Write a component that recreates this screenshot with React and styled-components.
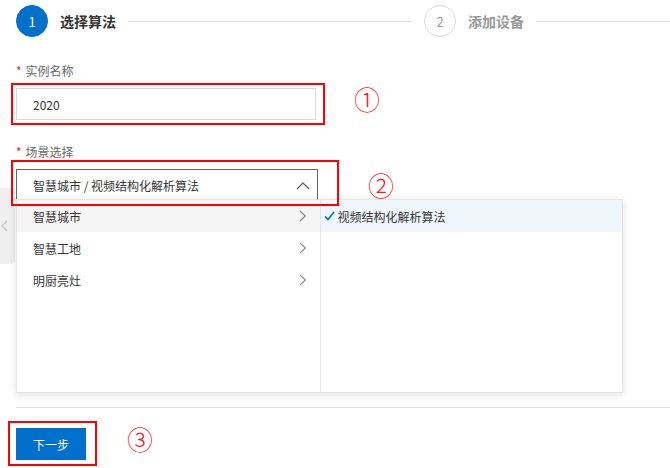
import styled, { createGlobalStyle } from 'styled-components';

const GlobalStyle = createGlobalStyle`
	html, body {
		margin: 0;
		padding: 0;
		background: #fff;
		font-family: "Noto Sans CJK SC", "Noto Sans", sans-serif;
		color: #333;
	}
	* {
		box-sizing: border-box;
	}
`;

const Page = styled.div`
	position: relative;
	width: 670px;
	height: 468px;
	overflow: hidden;
`;

const SideTab = styled.div`
	position: absolute;
	left: 0;
	top: 188px;
	width: 15px;
	height: 76px;
	background: #efefef;
	border-radius: 0 4px 4px 0;
	display: flex;
	align-items: center;
	padding-left: 1px;
`;

const Steps = styled.div`
	display: flex;
	align-items: center;
	padding: 5px 0 0 16px;
	height: 37px;
`;

const StepCircle = styled.div`
	width: 32px;
	height: 32px;
	flex: none;
	border-radius: 50%;
	display: flex;
	align-items: center;
	justify-content: center;
	font-size: 13px;
	background: ${(p) => (p.$active ? '#0070cc' : '#fff')};
	border: 1px solid ${(p) => (p.$active ? '#0070cc' : '#dcdcdc')};
	color: ${(p) => (p.$active ? '#fff' : '#999')};
`;

const StepTitle = styled.div`
	margin-left: 12px;
	font-size: 14px;
	font-weight: bold;
	color: ${(p) => (p.$active ? '#333' : '#999')};
	white-space: nowrap;
`;

const StepLine = styled.div`
	height: 1px;
	background: #dcdcdc;
	margin: 0 12px;
	width: ${(p) => p.$width}px;
	flex: none;
`;

const Field = styled.div`
	padding-left: 16px;
	margin-top: ${(p) => p.$top}px;
`;

const Label = styled.div`
	font-size: 12px;
	line-height: 16px;
	color: #666;
	margin-bottom: ${(p) => p.$gap}px;

	& span {
		color: #f5222d;
		margin-right: 4px;
	}
`;

const AnnotatedRow = styled.div`
	display: flex;
	align-items: center;
`;

const Frame = styled.div`
	position: relative;
	margin-left: -5px;
	padding: ${(p) => p.$pad};

	&::after {
		content: '';
		position: absolute;
		inset: 0;
		border: 2px solid #ff0000;
		z-index: 3;
		pointer-events: none;
	}
`;

const Mark = styled.div`
	margin-left: ${(p) => p.$gap}px;
	font-size: 26px;
	line-height: 26px;
	color: #ff1a1a;
	font-weight: 300;
	margin-top: ${(p) => p.$dy || 0}px;
`;

const TextInput = styled.div`
	width: 300px;
	height: 32px;
	border: 1px solid #d9d9d9;
	padding-left: 16px;
	display: flex;
	align-items: center;
	font-size: 12px;
	color: #333;
`;

const Select = styled.div`
	position: relative;
	width: 302px;
	height: 32px;
	border: 1px solid #666;
	padding: 0 0 0 16px;
	display: flex;
	align-items: center;
	justify-content: space-between;
	font-size: 12px;
	color: #333;
`;

const Chevron = styled.svg`
	margin-right: 7px;
`;

const Dropdown = styled.div`
	position: absolute;
	left: -1px;
	top: calc(100% - 1px);
	width: 607px;
	height: 194px;
	background: #fff;
	border: 1px solid #e6e6e6;
	box-shadow: 0 2px 8px rgba(0, 0, 0, 0.12);
	display: flex;
	z-index: 2;
`;

const Column = styled.div`
	width: ${(p) => p.$width}px;
	height: 100%;
	border-right: ${(p) => (p.$divider ? '1px solid #e6e6e6' : 'none')};
`;

const MenuItem = styled.div`
	height: 32px;
	display: flex;
	align-items: center;
	justify-content: space-between;
	padding: 0 13px 0 16px;
	font-size: 12px;
	color: #333;
	background: ${(p) => p.$bg || 'transparent'};
`;

const LeafItem = styled.div`
	height: 32px;
	display: flex;
	align-items: center;
	padding-left: 3px;
	font-size: 12px;
	color: #333;
	background: #eff7fd;

	& svg {
		margin-right: 3px;
	}
`;

const Divider = styled.div`
	margin: 201px 0 0 16px;
	height: 1px;
	background: #dcdcdc;
`;

const Footer = styled.div`
	padding: 13px 0 0 13px;
`;

const PrimaryButton = styled.button`
	width: 70px;
	height: 32px;
	border: none;
	background: #0070cc;
	color: #fff;
	font-family: inherit;
	font-size: 12px;
	padding: 0;
	display: block;
`;

const Arrow = () => (
	<svg width="8" height="12" viewBox="0 0 8 12">
		<path d="M1 1l5.5 5L1 11" fill="none" stroke="#888" strokeWidth="1.1" />
	</svg>
);

const categories = ['智慧城市', '智慧工地', '明厨亮灶'];

export default function App() {
	return (
		<Page>
			<GlobalStyle />
			<SideTab>
				<svg width="7" height="12" viewBox="0 0 7 12">
					<path d="M6 1L1 6l5 5" fill="none" stroke="#c4c4c4" strokeWidth="1.2" />
				</svg>
			</SideTab>
			<Steps>
				<StepCircle $active>1</StepCircle>
				<StepTitle $active>选择算法</StepTitle>
				<StepLine $width={284} />
				<StepCircle>2</StepCircle>
				<StepTitle>添加设备</StepTitle>
				<StepLine $width={140} />
			</Steps>

			<Field $top={26}>
				<Label $gap={4}>
					<span>*</span>实例名称
				</Label>
				<AnnotatedRow>
					<Frame $pad="5px 9px 5px 5px">
						<TextInput>2020</TextInput>
					</Frame>
					<Mark $gap={29} $dy={-10}>①</Mark>
				</AnnotatedRow>
			</Field>

			<Field $top={19}>
				<Label $gap={0}>
					<span>*</span>场景选择
				</Label>
				<AnnotatedRow>
					<Frame $pad="9px 21px 5px 5px">
						<Select>
							智慧城市 / 视频结构化解析算法
							<Chevron width="14" height="9" viewBox="0 0 14 9">
								<path d="M1 8l6-6 6 6" fill="none" stroke="#666" strokeWidth="1.3" />
							</Chevron>
							<Dropdown>
								<Column $width={304} $divider>
									{categories.map((c, i) => (
										<MenuItem key={c} $bg={i === 0 ? '#f5f5f5' : undefined}>
											{c}
											<Arrow />
										</MenuItem>
									))}
								</Column>
								<Column $width={302}>
									<LeafItem>
										<svg width="11" height="10" viewBox="0 0 11 10">
											<path d="M1 5.5l3 3L10 1" fill="none" stroke="#0070cc" strokeWidth="1.6" />
										</svg>
										视频结构化解析算法
									</LeafItem>
								</Column>
							</Dropdown>
						</Select>
					</Frame>
					<Mark $gap={29} $dy={4}>②</Mark>
				</AnnotatedRow>
			</Field>

			<Divider />

			<Footer>
				<AnnotatedRow>
					<Frame $pad="7px 11px 6px 8px">
						<PrimaryButton>下一步</PrimaryButton>
					</Frame>
					<Mark $gap={30} $dy={-9}>③</Mark>
				</AnnotatedRow>
			</Footer>
		</Page>
	);
}
